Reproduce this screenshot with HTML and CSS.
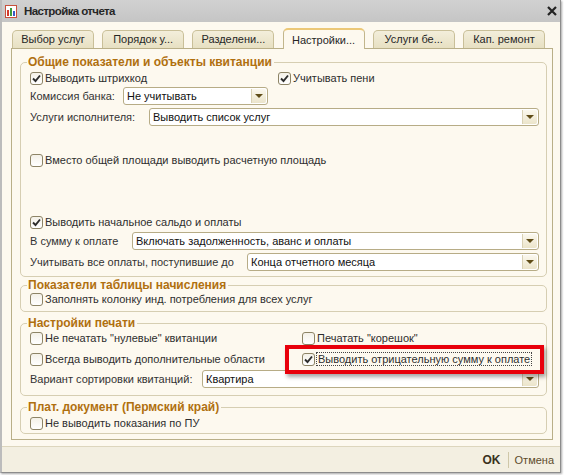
FILE: index.html
```html
<!DOCTYPE html>
<html lang="ru">

<head>
    <meta charset="UTF-8">
    <title>Настройка отчета</title>
    <link rel="stylesheet" href="styles.css">
</head>

<body>
    <div class="window">
        <div class="titlebar">
            <svg class="app-icon" width="12" height="13" viewBox="0 0 12 13">
                <rect x="0.5" y="0.5" width="11" height="12" fill="#fff" stroke="#c8503c"/>
                <rect x="2" y="5" width="2" height="6" fill="#d23a2a"/>
                <rect x="5" y="3" width="2" height="8" fill="#3a9a3a"/>
                <rect x="8" y="6" width="2" height="5" fill="#3a5ac8"/>
            </svg>
            <span class="title">Настройка отчета</span>
            <svg class="close" width="10" height="10" viewBox="0 0 10 10">
                <path d="M1 1 L9 9 M9 1 L1 9" stroke="#222" stroke-width="2.2"/>
            </svg>
        </div>

        <div class="content">
            <div class="tabs">
                <div class="tab">Выбор услуг</div>
                <div class="tab">Порядок у...</div>
                <div class="tab">Разделени...</div>
                <div class="tab active">Настройки...</div>
                <div class="tab">Услуги бе...</div>
                <div class="tab">Кап. ремонт</div>
            </div>

            <div class="panel">
                <fieldset class="group group-common">
                    <legend>Общие показатели и объекты квитанции</legend>
                    <div class="row cols cols-common">
                        <label class="check"><span class="box"><svg viewBox="0 0 11 11"><path d="M2 5.5 L4.5 8 L9 2.5"/></svg></span>Выводить штрихкод</label>
                        <label class="check"><span class="box"><svg viewBox="0 0 11 11"><path d="M2 5.5 L4.5 8 L9 2.5"/></svg></span>Учитывать пени</label>
                    </div>
                    <div class="row">
                        <span class="caption w-bank">Комиссия банка:</span>
                        <div class="select select-bank"><span class="value">Не учитывать</span><span class="arrow"></span></div>
                    </div>
                    <div class="row gap-3">
                        <span class="caption w-services">Услуги исполнителя:</span>
                        <div class="select"><span class="value">Выводить список услуг</span><span class="arrow"></span></div>
                    </div>
                    <div class="row gap-area">
                        <label class="check"><span class="box empty"></span>Вместо общей площади выводить расчетную площадь</label>
                    </div>
                    <div class="row gap-saldo">
                        <label class="check"><span class="box"><svg viewBox="0 0 11 11"><path d="M2 5.5 L4.5 8 L9 2.5"/></svg></span>Выводить начальное сальдо и оплаты</label>
                    </div>
                    <div class="row gap-1">
                        <span class="caption w-sum">В сумму к оплате</span>
                        <div class="select"><span class="value">Включать задолженность, аванс и оплаты</span><span class="arrow"></span></div>
                    </div>
                    <div class="row gap-3">
                        <span class="caption w-pay">Учитывать все оплаты, поступившие до</span>
                        <div class="select"><span class="value">Конца отчетного месяца</span><span class="arrow"></span></div>
                    </div>
                </fieldset>

                <fieldset class="group group-table">
                    <legend>Показатели таблицы начисления</legend>
                    <div class="row short">
                        <label class="check"><span class="box empty"></span>Заполнять колонку инд. потребления для всех услуг</label>
                    </div>
                </fieldset>

                <fieldset class="group group-print">
                    <legend>Настройки печати</legend>
                    <div class="row cols cols-print mid">
                        <label class="check"><span class="box empty"></span>Не печатать "нулевые" квитанции</label>
                        <label class="check"><span class="box empty"></span>Печатать "корешок"</label>
                    </div>
                    <div class="row cols cols-print mid gap-5">
                        <label class="check"><span class="box empty"></span>Всегда выводить дополнительные области</label>
                        <label class="check marked"><span class="box"><svg viewBox="0 0 11 11"><path d="M2 5.5 L4.5 8 L9 2.5"/></svg></span><span class="focus">Выводить отрицательную сумму к оплате</span><span class="highlight"></span></label>
                    </div>
                    <div class="row gap-3">
                        <span class="caption w-sort">Вариант сортировки квитанций:</span>
                        <div class="select"><span class="value">Квартира</span><span class="arrow"></span></div>
                    </div>
                </fieldset>

                <fieldset class="group group-perm">
                    <legend>Плат. документ (Пермский край)</legend>
                    <div class="row short gap-2">
                        <label class="check"><span class="box empty"></span>Не выводить показания по ПУ</label>
                    </div>
                </fieldset>
            </div>
        </div>

        <div class="footer">
            <span class="ok">OK</span>
            <span class="sep"></span>
            <span class="cancel">Отмена</span>
        </div>
    </div>
</body>

</html>
```

FILE: styles.css
```css
* {
    margin: 0;
    padding: 0;
    box-sizing: border-box;
}

body {
    width: 564px;
    height: 475px;
    background: #fff;
    font-family: "Liberation Sans", Arial, sans-serif;
    font-size: 11px;
    color: #2e2e2e;
    overflow: hidden;
}

.window {
    width: 561px;
    height: 473px;
    display: flex;
    flex-direction: column;
    background: #fdf9ef;
    border-left: 2px solid #bcbcbc;
    border-right: 1px solid #8c8c8c;
    border-bottom: 1px solid #8c8c8c;
    box-shadow: 1px 1px 2px rgba(0, 0, 0, 0.35);
}

/* title bar */
.titlebar {
    height: 22px;
    display: flex;
    align-items: center;
    padding-left: 3px;
    background: linear-gradient(#d1d1d1, #c5c5c5);
}

.app-icon {
    margin-right: 7px;
}

.title {
    font-weight: bold;
    font-size: 11.5px;
    letter-spacing: -0.6px;
    color: #262626;
}

.close {
    margin-left: auto;
    margin-right: 3px;
}

/* tabs + panel */
.content {
    flex: 1;
    display: flex;
    flex-direction: column;
    padding: 6px 7px 6px 9px;
}

.tabs {
    display: flex;
    align-items: flex-end;
    gap: 8.2px;
    height: 20px;
    padding-left: 1px;
}

.tab {
    width: 82px;
    height: 18px;
    border: 1px solid #c9bf98;
    border-bottom: none;
    border-radius: 5px 5px 0 0;
    background: linear-gradient(#f3eedb, #e7e0c2);
    text-align: center;
    line-height: 17px;
    color: #262626;
}

.tab.active {
    height: 21px;
    margin-bottom: -1px;
    padding-top: 2px;
    position: relative;
    z-index: 1;
    background: #fdf9ef;
    border-color: #c2b68c;
    border-top: 2px solid #ecc877;
    line-height: 16px;
}

.panel {
    flex: 1;
    border: 1px solid #b9af88;
    padding: 6px 5px 4px 8px;
}

/* groups */
.group {
    border: 1px solid #d6ceb2;
    border-radius: 5px;
    padding: 0 7px 5px 9px;
    min-width: 0;
}

.group legend {
    font-weight: bold;
    font-size: 12px;
    color: #b0700f;
    line-height: 14px;
    margin-left: -3px;
    padding: 0 2px 0 1px;
}

.group-table {
    margin-top: 1px;
}

.group-print {
    margin-top: 4px;
    padding-bottom: 7px;
}

.group-perm {
    margin-top: 4px;
    padding-bottom: 3px;
}

.row {
    display: flex;
    align-items: center;
    height: 18px;
}

.row.short {
    height: 14px;
}

.row.mid {
    height: 16px;
}

.cols {
    display: grid;
    align-items: center;
}

.cols-common {
    grid-template-columns: 248px 1fr;
}

.cols-print {
    grid-template-columns: 272px 1fr;
}

.gap-1 { margin-top: 1px; }
.gap-2 { margin-top: 2px; }
.gap-3 { margin-top: 3px; }
.gap-5 { margin-top: 5px; }
.gap-area { margin-top: 25px; }
.gap-saldo { margin-top: 44px; }

/* captions */
.caption {
    flex: none;
    color: #333;
}

.w-bank { width: 93px; }
.w-services { width: 119px; }
.w-sum { width: 102px; }
.w-pay { width: 217px; }
.w-sort { width: 172px; }

/* checkboxes */
.check {
    display: flex;
    align-items: center;
    white-space: nowrap;
    color: #2e2e2e;
}

.box {
    width: 13px;
    height: 13px;
    margin-right: 2px;
    flex: none;
    border: 1px solid #8d8466;
    border-radius: 3px;
    background: linear-gradient(#f4f1e8, #fff);
    display: flex;
    align-items: center;
    justify-content: center;
}

.box svg {
    width: 11px;
    height: 11px;
}

.box path {
    fill: none;
    stroke: #2c2c2c;
    stroke-width: 1.9;
}

.marked {
    position: relative;
}

.focus {
    outline: 1px dotted #444;
    outline-offset: 0;
    padding: 0 1px;
}

.highlight {
    position: absolute;
    left: -17px;
    top: -8px;
    width: 259px;
    height: 29px;
    border: 4px solid #e8000b;
    box-shadow: 2px 3px 4px rgba(0, 0, 0, 0.35);
    pointer-events: none;
}

/* dropdowns */
.select {
    flex: 1;
    height: 18px;
    display: flex;
    align-items: center;
    background: #fff;
    border: 1px solid #b7ac86;
    border-radius: 3px;
}

.select-bank {
    flex: none;
    width: 145px;
}

.select .value {
    flex: 1;
    padding-left: 3px;
    color: #111;
    white-space: nowrap;
    overflow: hidden;
}

.select .arrow {
    width: 15px;
    height: 14px;
    margin-right: 1px;
    border-left: 1px solid #d9d1b4;
    border-radius: 0 2px 2px 0;
    background: linear-gradient(#fbf8ee, #ebe4ca);
    display: flex;
    align-items: center;
    justify-content: center;
}

.select .arrow::after {
    content: "";
    border-left: 4px solid transparent;
    border-right: 4px solid transparent;
    border-top: 4px solid #5f4c17;
}

/* footer */
.footer {
    height: 26px;
    display: flex;
    align-items: center;
    justify-content: flex-end;
    padding-right: 6px;
    border-top: 1px solid #ddd6bd;
    background: #f3efe1;
}

.ok {
    font-weight: bold;
    font-size: 12px;
    color: #3a3220;
}

.sep {
    width: 1px;
    height: 16px;
    margin: 0 6px 0 7px;
    background: #cfc7a8;
}

.cancel {
    color: #5e4c2c;
}
```
